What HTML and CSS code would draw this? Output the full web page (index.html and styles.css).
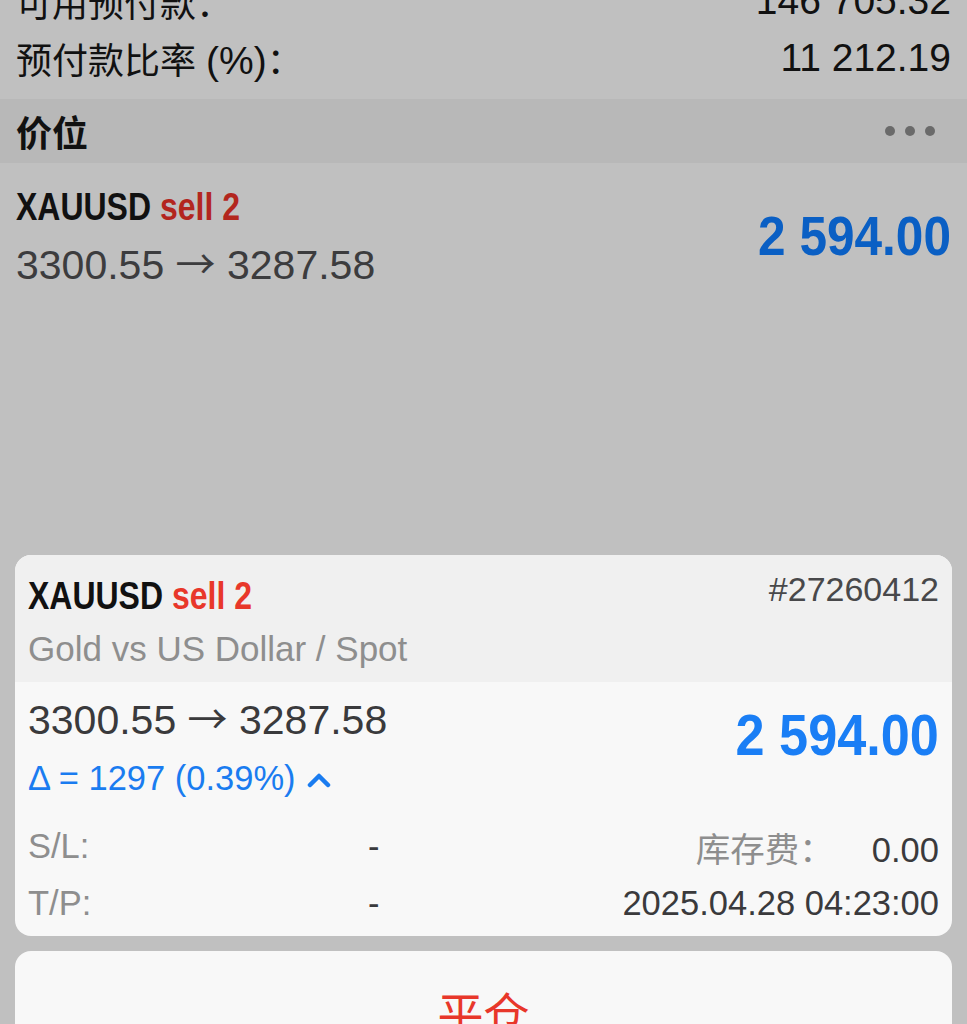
FILE: index.html
```html
<!DOCTYPE html>
<html lang="zh-CN">
<head>
    <meta charset="UTF-8">
    <meta name="viewport" content="width=device-width, initial-scale=1.0">
    <title>价位</title>
    <link rel="stylesheet" href="styles.css">
</head>
<body>

    <div class="account">
        <div class="account-row">
            <span class="label">可用预付款：</span>
            <span class="value">146 705.32</span>
        </div>
        <div class="account-row">
            <span class="label">预付款比率 <span class="pct">(%)</span>：</span>
            <span class="value">11 212.19</span>
        </div>
    </div>

    <div class="section-header">
        <span class="section-title">价位</span>
        <span class="dots"><i></i><i></i><i></i></span>
    </div>

    <div class="quote-list">
        <div class="quote-row">
            <div class="quote-left">
                <div class="symbol">XAUUSD <span class="side">sell 2</span></div>
                <div class="prices">3300.55 <span class="arrow">→</span> 3287.58</div>
            </div>
            <div class="profit">2 594.00</div>
        </div>
    </div>

    <div class="popup">
        <div class="card">
            <div class="card-head">
                <div class="head-top">
                    <div class="symbol">XAUUSD <span class="side">sell 2</span></div>
                    <div class="ticket">#27260412</div>
                </div>
                <div class="desc">Gold vs US Dollar / Spot</div>
            </div>
            <div class="card-body">
                <div class="body-top">
                    <div>
                        <div class="prices">3300.55 <span class="arrow">→</span> 3287.58</div>
                        <div class="delta">Δ = 1297 (0.39%)
                            <svg class="caret" width="24" height="16" viewBox="0 0 24 16">
                                <path d="M3 13 L12 4 L21 13" fill="none" stroke="#1a7cf0" stroke-width="4.5" stroke-linecap="round" stroke-linejoin="round"/>
                            </svg>
                        </div>
                    </div>
                    <div class="profit">2 594.00</div>
                </div>
                <div class="details">
                    <div class="detail-row">
                        <span class="d-label">S/L:</span>
                        <span class="d-dash">-</span>
                        <span class="d-right"><span class="d-label">库存费：</span><span class="d-value">0.00</span></span>
                    </div>
                    <div class="detail-row">
                        <span class="d-label">T/P:</span>
                        <span class="d-dash">-</span>
                        <span class="d-right"><span class="d-value">2025.04.28 04:23:00</span></span>
                    </div>
                </div>
            </div>
        </div>

        <div class="action-card">
            <span class="close-btn">平仓</span>
        </div>
    </div>

</body>
</html>
```

FILE: styles.css
```css
body {
    margin: 0;
    background: #c0c0c0;
    font-family: "Liberation Sans", "Noto Sans CJK SC", sans-serif;
    color: #111;
    overflow: hidden;
    height: 1024px;
}

.account {
    margin-top: -28px;
    padding: 0 16px;
}

.account-row {
    display: flex;
    justify-content: space-between;
    align-items: center;
    height: 57px;
    font-size: 36px;
}

.account-row .value {
    font-size: 39px;
}

.pct {
    font-size: 39px;
    line-height: 0;
}

.section-header {
    display: flex;
    justify-content: space-between;
    align-items: center;
    height: 64px;
    margin-top: 13px;
    padding: 0 16px;
    background: #b8b8b8;
}

.section-title {
    font-size: 36px;
    font-weight: bold;
}

.dots {
    display: flex;
    gap: 10px;
    margin-right: 16px;
}

.dots i {
    width: 10px;
    height: 10px;
    border-radius: 50%;
    background: #6a6a6a;
}

.quote-list {
    height: 392px;
}

.quote-row {
    display: flex;
    justify-content: space-between;
    align-items: flex-start;
    padding: 22px 16px 0;
}

.symbol {
    font-weight: bold;
    font-size: 39px;
    color: #111;
    display: inline-block;
    transform: scaleX(0.82);
    transform-origin: left center;
}

.quote-row .side {
    color: #b3261e;
}

.prices {
    font-size: 41px;
    color: #3c3c3e;
    margin-top: 13px;
}

.arrow {
    font-family: "Noto Sans CJK SC", sans-serif;
    font-size: 40px;
    line-height: 0;
}

.profit {
    font-weight: bold;
    font-size: 56px;
    color: #0a5fc4;
    transform: scaleX(0.885);
    transform-origin: right center;
}

.quote-row .profit {
    margin-top: 18px;
}

.popup {
    padding: 0 15px;
}

.card {
    border-radius: 16px;
    overflow: hidden;
    background: #f8f8f8;
}

.card-head {
    background: #f0f0f0;
    padding: 19px 13px 14px;
    height: 94px;
}

.head-top {
    display: flex;
    justify-content: space-between;
    align-items: flex-start;
}

.card .side {
    color: #e8372a;
}

.ticket {
    font-size: 34px;
    color: #48484a;
    margin-top: -4px;
}

.desc {
    font-size: 35px;
    color: #8e8e8e;
    margin-top: 11px;
}

.card-body {
    padding: 15px 13px 4px;
}

.body-top {
    display: flex;
    justify-content: space-between;
    align-items: flex-start;
}

.card-body .prices {
    margin-top: 0;
    color: #3a3a3c;
}

.delta {
    font-size: 34.5px;
    color: #1a7cf0;
    margin-top: 15px;
}

.caret {
    vertical-align: 2px;
    margin-left: 2px;
}

.card-body .profit {
    color: #1a7ef5;
    font-size: 58px;
    transform: scaleX(0.9);
    margin-top: 4px;
}

.details {
    margin-top: 20px;
}

.detail-row {
    display: grid;
    grid-template-columns: 340px 1fr auto;
    align-items: center;
    height: 57px;
    font-size: 34.5px;
}

.d-label {
    color: #8e8e8e;
}

.d-value {
    color: #3a3a3c;
}

.d-dash {
    color: #3a3a3c;
}

.d-right .d-label {
    margin-right: 38px;
}

.action-card {
    margin-top: 15px;
    height: 120px;
    border-radius: 16px;
    background: #f8f8f8;
    display: flex;
    justify-content: center;
    padding-top: 27px;
}

.close-btn {
    font-size: 46px;
    color: #e8372a;
}
```
